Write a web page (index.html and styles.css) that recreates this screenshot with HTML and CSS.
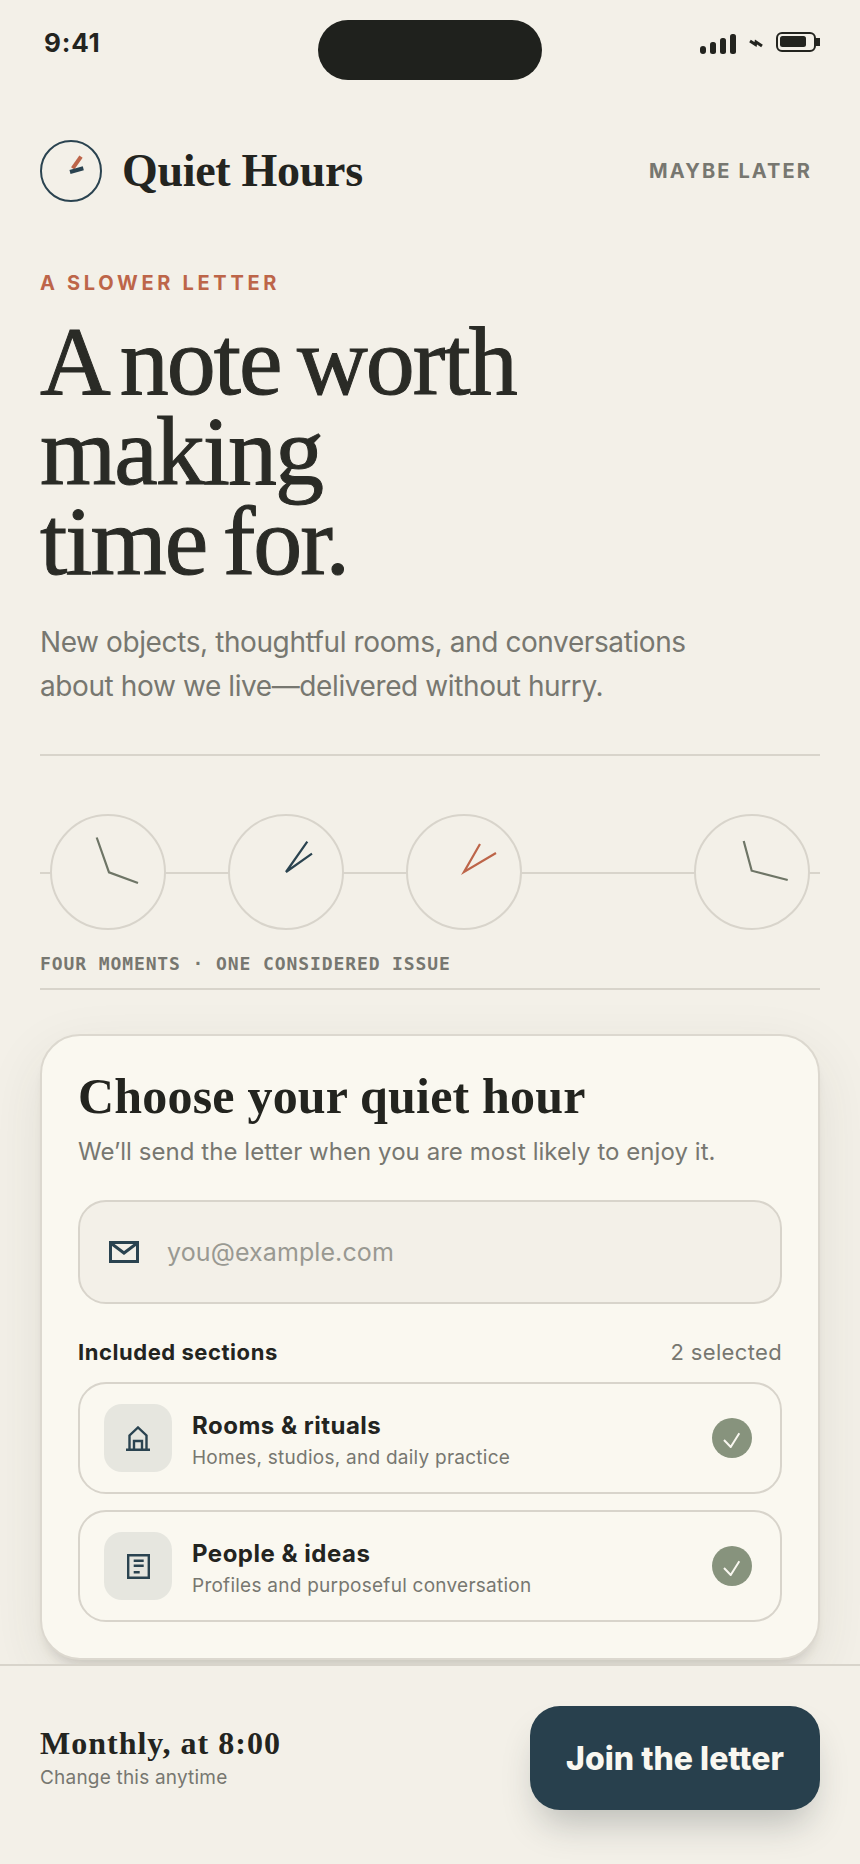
FILE: index.html
```html
<!DOCTYPE html>
<html lang="en">
<head>
<meta charset="utf-8">
<title>Quiet Hours</title>
<link rel="stylesheet" href="styles.css">
</head>
<body>
<div class="screen">
  <div class="scroll">
    <div class="status">
      <span class="time">9:41</span>
      <div class="island"></div>
      <div class="status-icons">
        <svg width="36" height="20" viewBox="0 0 36 20"><g fill="#23241f"><rect x="0" y="12" width="6" height="8" rx="3"/><rect x="10" y="8" width="6" height="12" rx="2.5"/><rect x="20" y="4" width="6" height="16" rx="2.5"/><rect x="30" y="0" width="6" height="20" rx="2.5"/></g></svg>
        <svg width="14" height="10" viewBox="0 0 14 10"><path d="M1 2 L6.500 5.500 L7 3 L13 7" fill="none" stroke="#23241f" stroke-width="3"/></svg>
        <svg class="batt" width="44" height="20" viewBox="0 0 44 20"><rect x="1" y="1" width="38" height="18" rx="5" fill="none" stroke="#23241f" stroke-width="2"/><rect x="4" y="4" width="26" height="11" rx="2.500" fill="#23241f"/><rect x="40" y="6" width="4" height="8" fill="#23241f"/></svg>
      </div>
    </div>

    <header class="brand">
      <div class="brand-left">
        <svg class="logo" width="62" height="62" viewBox="0 0 62 62"><circle cx="31" cy="31" r="30" fill="none" stroke="#2a4350" stroke-width="2"/><path d="M32.700 28.300 L41 16.700" stroke="#bd6549" stroke-width="4" fill="none"/><path d="M30 32 L43.300 28.300" stroke="#2a4350" stroke-width="4" fill="none"/></svg>
        <span class="brand-name">Quiet Hours</span>
      </div>
      <span class="later">MAYBE LATER</span>
    </header>

    <section class="hero">
      <p class="eyebrow">A SLOWER LETTER</p>
      <h1 class="headline">A note worth<br>making<br>time for.</h1>
      <p class="lede">New objects, thoughtful rooms, and conversations<br>about how we live—delivered without hurry.</p>
    </section>

    <section class="moments">
      <div class="dials">
        <svg class="dial" width="116" height="116" viewBox="0 0 116 116"><circle cx="58" cy="58" r="57" class="dial-face"/><path d="M46.700 23.500 L59 58.300 L88 69" class="hand hand-sage"/></svg>
        <svg class="dial" width="116" height="116" viewBox="0 0 116 116"><circle cx="58" cy="58" r="57" class="dial-face"/><path d="M79.300 27.700 L58 58 L84 39.700" class="hand hand-ink"/></svg>
        <svg class="dial" width="116" height="116" viewBox="0 0 116 116"><circle cx="58" cy="58" r="57" class="dial-face"/><path d="M74 30 L58 58 L90 39" class="hand hand-clay"/></svg>
        <svg class="dial dial-last" width="116" height="116" viewBox="0 0 116 116"><circle cx="58" cy="58" r="57" class="dial-face"/><path d="M49.700 27 L57.700 56.700 L93.700 66" class="hand hand-sage"/></svg>
      </div>
      <p class="moments-note">FOUR MOMENTS · ONE CONSIDERED ISSUE</p>
    </section>

    <section class="card">
      <h2 class="card-title">Choose your quiet hour</h2>
      <p class="card-sub">We’ll send the letter when you are most likely to enjoy it.</p>
      <div class="field">
        <svg width="30" height="22" viewBox="0 0 30 22"><rect x="1.500" y="1.500" width="27" height="19" fill="none" stroke="#2a4350" stroke-width="3"/><path d="M3 3 L15 12 L27 3" fill="none" stroke="#2a4350" stroke-width="3"/></svg>
        <span class="placeholder">you@example.com</span>
      </div>
      <div class="sections-head">
        <span class="sections-label">Included sections</span>
        <span class="sections-count">2 selected</span>
      </div>
      <div class="option">
        <div class="option-icon">
          <svg width="24" height="25" viewBox="0 0 24 25"><path d="M3.500 23 V9.500 L12 1.500 L20.500 9.500 V23 M0 23.800 H24 M8 24 V15 H16 V24" fill="none" stroke="#2a4350" stroke-width="2.400"/></svg>
        </div>
        <div class="option-text">
          <div class="option-title">Rooms &amp; rituals</div>
          <div class="option-sub">Homes, studios, and daily practice</div>
        </div>
        <div class="check"><svg width="20" height="20" viewBox="0 0 20 20"><path d="M2 12 L8.700 19 L17.300 5.300" fill="none" stroke="#f9f7f0" stroke-width="2"/></svg></div>
      </div>
      <div class="option">
        <div class="option-icon">
          <svg width="23" height="25" viewBox="0 0 23 25"><path d="M1.200 1.200 H21.800 V23.800 H1.200Z M6.700 6.700 H16.700 M6.700 11.700 H16.700 M6.700 18.300 H12.700" fill="none" stroke="#2a4350" stroke-width="2.400"/></svg>
        </div>
        <div class="option-text">
          <div class="option-title">People &amp; ideas</div>
          <div class="option-sub">Profiles and purposeful conversation</div>
        </div>
        <div class="check"><svg width="20" height="20" viewBox="0 0 20 20"><path d="M2 12 L8.700 19 L17.300 5.300" fill="none" stroke="#f9f7f0" stroke-width="2"/></svg></div>
      </div>
    </section>
  </div>

  <footer class="bar">
    <div class="bar-text">
      <div class="bar-title">Monthly, at 8:00</div>
      <div class="bar-sub">Change this anytime</div>
    </div>
    <button class="join">Join the letter</button>
  </footer>
</div>
</body>
</html>
```

FILE: styles.css
```css
* { box-sizing: border-box; }
html, body { margin: 0; padding: 0; }
body {
  width: 860px;
  height: 1864px;
  background: #f3f0e8;
  font-family: Inter, "Liberation Sans", sans-serif;
  color: #23241f;
  overflow: hidden;
}
p, h1, h2 { margin: 0; }
.screen {
  height: 1864px;
  display: flex;
  flex-direction: column;
  overflow: hidden;
}
.scroll {
  height: 1664px;
  padding: 0 40px;
  overflow: hidden;
  flex: none;
}
.status {
  height: 80px;
  padding-top: 20px;
  display: flex;
  justify-content: space-between;
  align-items: flex-start;
  position: relative;
}
.time {
  font-size: 26px;
  font-weight: 700;
  line-height: 46px;
  margin-left: 4px;
  letter-spacing: 0.8px;
}
.island {
  position: absolute;
  left: 278px;
  top: 20px;
  width: 224px;
  height: 60px;
  border-radius: 30px;
  background: #1f211d;
}
.status-icons {
  display: flex;
  align-items: center;
  gap: 13px;
  height: 44px;
  margin-top: 2px;
}
.status-icons .batt { margin-bottom: 4px; }
.brand {
  margin-top: 60px;
  height: 62px;
  display: flex;
  justify-content: space-between;
  align-items: center;
}
.brand-left { display: flex; align-items: center; gap: 20px; }
.logo { display: block; }
.brand-name {
  font-family: "Liberation Serif", serif;
  font-weight: 700;
  font-size: 46px;
  letter-spacing: -0.3px;
  margin-bottom: 2px;
}
.later {
  font-size: 20px;
  font-weight: 700;
  letter-spacing: 2.1px;
  color: #777770;
  margin-right: 8px;
}
.hero { margin-top: 67px; }
.eyebrow {
  font-size: 20px;
  font-weight: 700;
  letter-spacing: 3.7px;
  color: #bd6549;
  line-height: 28px;
}
.headline {
  margin-top: 19px;
  font-family: "Liberation Serif", serif;
  font-weight: 400;
  font-size: 98px;
  line-height: 90px;
  letter-spacing: -2px;
  word-spacing: -6px;
  color: #2a2b26;
  -webkit-text-stroke: 1px #2a2b26;
}
.lede {
  margin-top: 34px;
  font-size: 28px;
  line-height: 44px;
  letter-spacing: -0.4px;
  color: #777770;
}
.moments {
  margin-top: 46px;
  border-top: 2px solid #d8d4cb;
  border-bottom: 2px solid #d8d4cb;
  height: 236px;
  padding-top: 58px;
}
.dials {
  height: 116px;
  display: flex;
  padding-left: 10px;
  gap: 62px;
  background: linear-gradient(#d8d4cb, #d8d4cb) 0 58px / 100% 2px no-repeat;
}
.dial { display: block; flex: none; }
.dial-last { margin-left: 110px; }
.dial-face { fill: #f3f0e8; stroke: #d8d4cb; stroke-width: 2; }
.hand { fill: none; stroke-width: 2.2; }
.hand-sage { stroke: #6e7566; }
.hand-ink { stroke: #2a4350; }
.hand-clay { stroke: #bd6549; }
.moments-note {
  margin-top: 22px;
  font-family: "DejaVu Sans Mono", "Liberation Mono", monospace;
  font-weight: 700;
  font-size: 18px;
  letter-spacing: 0.9px;
  line-height: 24px;
  color: #777770;
}
.card {
  margin-top: 44px;
  height: 626px;
  background: #faf8f0;
  border: 2px solid #dcd8cf;
  border-radius: 40px;
  padding: 33px 36px 0;
  box-shadow: 0 10px 12px -6px rgba(50, 45, 30, 0.16), 0 20px 60px rgba(60, 55, 40, 0.09);
}
.card-title {
  font-family: "Liberation Serif", serif;
  font-weight: 700;
  font-size: 50px;
  line-height: 54px;
  letter-spacing: 0.2px;
}
.card-sub {
  margin-top: 11px;
  font-size: 24px;
  line-height: 36px;
  letter-spacing: 0.05px;
  color: #777770;
}
.field {
  margin-top: 30px;
  height: 104px;
  border: 2px solid #d8d4cb;
  border-radius: 28px;
  background: #f3f0e8;
  display: flex;
  align-items: center;
  padding-left: 29px;
  gap: 28px;
}
.field svg { display: block; }
.placeholder { font-size: 25px; letter-spacing: 0.1px; color: #999992; }
.sections-head {
  margin-top: 33px;
  height: 30px;
  display: flex;
  justify-content: space-between;
  align-items: center;
}
.sections-label { font-size: 22px; font-weight: 700; letter-spacing: 0.55px; }
.sections-count { font-size: 22px; letter-spacing: 0.35px; color: #777770; }
.option {
  margin-top: 15px;
  height: 112px;
  border: 2px solid #d8d4cb;
  border-radius: 28px;
  display: flex;
  align-items: center;
  padding: 0 28px 0 24px;
}
.option + .option { margin-top: 16px; }
.option-icon {
  width: 68px;
  height: 68px;
  border-radius: 18px;
  background: #e6e6df;
  display: flex;
  align-items: center;
  justify-content: center;
  flex: none;
}
.option-text { margin-left: 20px; flex: 1; padding-top: 7px; }
.option-title { font-size: 24px; font-weight: 700; line-height: 32px; letter-spacing: 0.5px; }
.option-sub { font-size: 19px; line-height: 31px; letter-spacing: 0.25px; color: #777770; }
.check {
  width: 40px;
  height: 40px;
  border-radius: 50%;
  background: #87937d;
  display: flex;
  align-items: center;
  justify-content: center;
}
.bar {
  height: 200px;
  flex: none;
  border-top: 2px solid #d8d4cb;
  background: #f3f0e8;
  padding: 40px 40px 0;
  display: flex;
  justify-content: space-between;
  align-items: flex-start;
}
.bar-text { margin-top: 17px; }
.bar-title {
  font-family: "Liberation Serif", serif;
  font-weight: 700;
  font-size: 32px;
  line-height: 40px;
  letter-spacing: 1px;
}
.bar-sub { margin-top: 2px; font-size: 19px; line-height: 26px; letter-spacing: 0.2px; color: #777770; }
.join {
  width: 290px;
  height: 104px;
  border: 0;
  border-radius: 30px;
  background: #28404d;
  color: #f9f7f0;
  font-family: Inter, "Liberation Sans", sans-serif;
  font-weight: 800;
  font-size: 32px;
  letter-spacing: 0;
  box-shadow: 0 22px 36px -10px rgba(40, 50, 55, 0.28);
}
```
